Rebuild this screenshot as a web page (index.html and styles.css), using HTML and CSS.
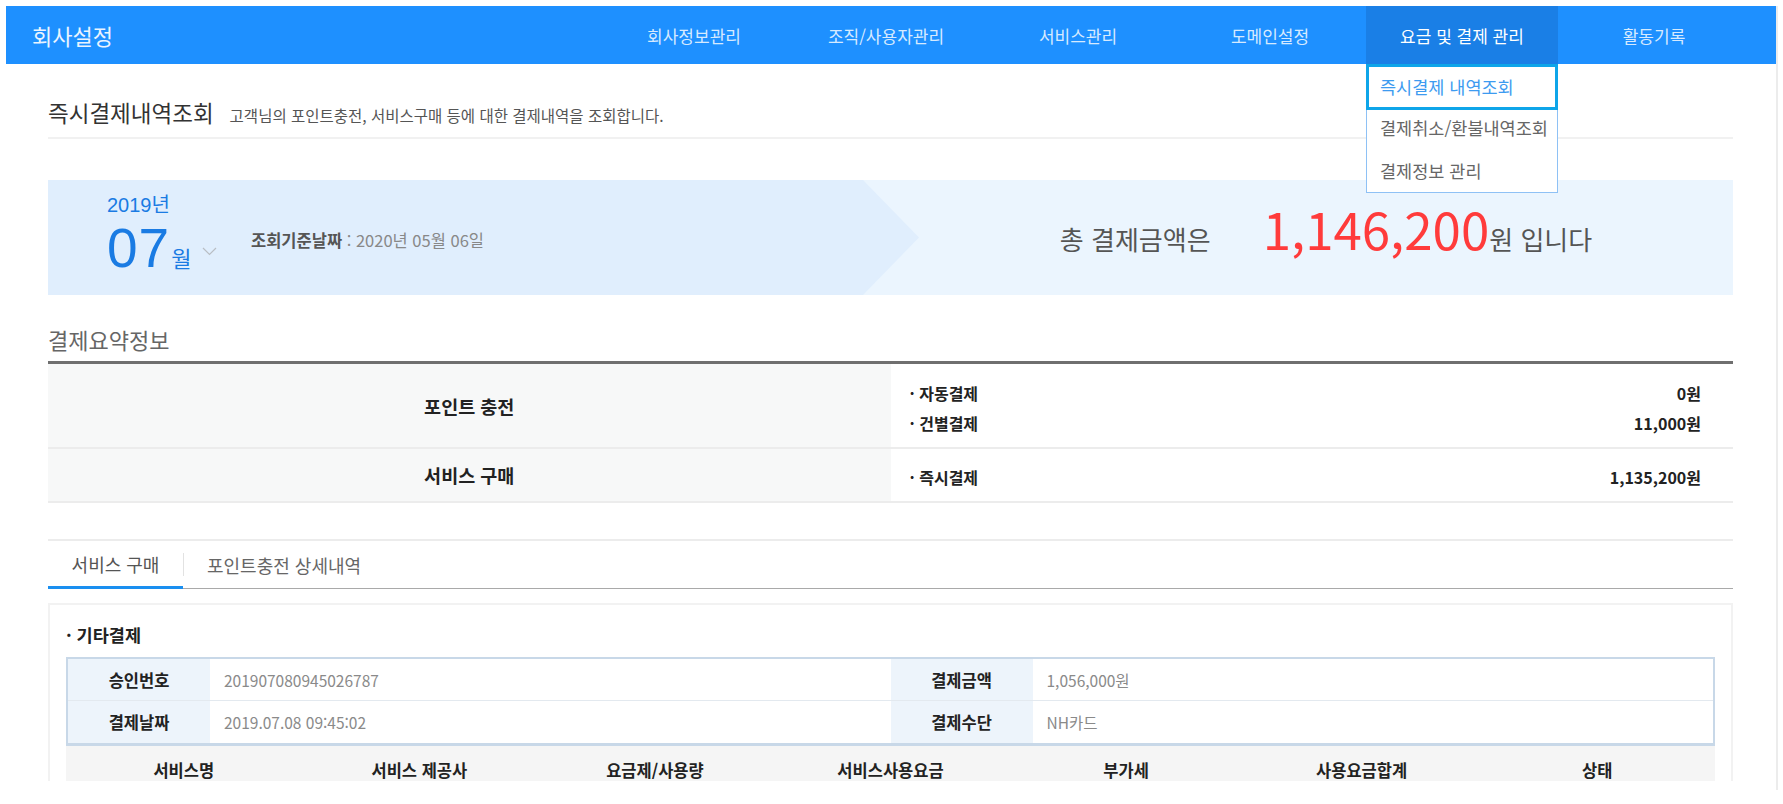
FILE: index.html
```html
<!DOCTYPE html>
<html lang="ko">
<head>
<meta charset="utf-8">
<title>회사설정 - 즉시결제내역조회</title>
<link rel="stylesheet" href="styles.css">
</head>
<body>
<div class="screen">
  <div class="page">
    <header class="gnb">
      <div class="logo">회사설정</div>
      <nav class="menu">
        <div class="menu-item">회사정보관리</div>
        <div class="menu-item">조직/사용자관리</div>
        <div class="menu-item">서비스관리</div>
        <div class="menu-item">도메인설정</div>
        <div class="menu-item active">요금 및 결제 관리
          <ul class="dropdown">
            <li class="dd-item current">즉시결제 내역조회</li>
            <li class="dd-item second">결제취소/환불내역조회</li>
            <li class="dd-item third">결제정보 관리</li>
          </ul>
        </div>
        <div class="menu-item">활동기록</div>
      </nav>
    </header>

    <main class="content">
      <div class="title-row">
        <h1 class="page-title">즉시결제내역조회</h1>
        <p class="page-desc">고객님의 포인트충전, 서비스구매 등에 대한 결제내역을 조회합니다.</p>
      </div>

      <section class="banner">
        <div class="banner-left">
          <div class="period">
            <div class="year">2019년</div>
            <div class="month"><span class="mm">07</span><span class="wol">월</span><svg class="chev" width="15" height="9" viewBox="0 0 15 9"><polyline points="1,1 7.5,7.5 14,1" fill="none" stroke="#b9bec4" stroke-width="1.2"/></svg></div>
          </div>
          <div class="basis"><b>조회기준날짜</b> : 2020년 05월 06일</div>
        </div>
        <div class="banner-right">
          <span class="total-label">총 결제금액은</span>
          <strong class="total-amount">1,146,200</strong>
          <span class="total-unit">원 입니다</span>
        </div>
      </section>

      <h2 class="sec-title">결제요약정보</h2>
      <div class="summary">
        <div class="sum-row r1">
          <div class="sum-name">포인트 충전</div>
          <div class="sum-detail">
            <div class="line"><span>· 자동결제</span><span>0원</span></div>
            <div class="line"><span>· 건별결제</span><span>11,000원</span></div>
          </div>
        </div>
        <div class="sum-row r2">
          <div class="sum-name">서비스 구매</div>
          <div class="sum-detail">
            <div class="line"><span>· 즉시결제</span><span>1,135,200원</span></div>
          </div>
        </div>
      </div>

      <div class="tabs">
        <div class="tab active">서비스 구매</div>
        <div class="tab-sep"></div>
        <div class="tab">포인트충전 상세내역</div>
      </div>

      <div class="box">
        <div class="box-title">· 기타결제</div>
        <div class="info">
          <div class="th row1">승인번호</div>
          <div class="td row1">201907080945026787</div>
          <div class="th row1">결제금액</div>
          <div class="td row1">1,056,000원</div>
          <div class="th">결제날짜</div>
          <div class="td">2019.07.08 09:45:02</div>
          <div class="th">결제수단</div>
          <div class="td">NH카드</div>
        </div>
        <div class="list-head">
          <div>서비스명</div>
          <div>서비스 제공사</div>
          <div>요금제/사용량</div>
          <div>서비스사용요금</div>
          <div>부가세</div>
          <div>사용요금합계</div>
          <div>상태</div>
        </div>
      </div>
    </main>
  </div>
</div>
</body>
</html>
```

FILE: styles.css
```css
* { box-sizing: border-box; margin: 0; padding: 0; }

body {
  background: #fff;
  font-family: "Noto Sans CJK KR", "Noto Sans", sans-serif;
  color: #333;
}

.screen {
  margin: 6px 0 0 6px;
  width: 1772px;
  height: 784px;
  border-right: 2px solid #ececec;
}

.page {
  height: 775px;
  overflow: hidden;
  position: relative;
}

/* ---------- top navigation ---------- */
.gnb {
  height: 58px;
  background: #1e90ff;
  display: flex;
  align-items: center;
  padding: 0 26px;
}

.logo {
  font-size: 22px;
  color: #eaf4ff;
}

.menu {
  margin-left: auto;
  display: flex;
  height: 100%;
}

.menu-item {
  width: 192px;
  height: 100%;
  display: flex;
  align-items: center;
  justify-content: center;
  font-size: 17px;
  color: #d6eaff;
  position: relative;
  white-space: nowrap;
}

.menu-item.active {
  background: #1a7fe6;
  color: #fff;
}

.dropdown {
  position: absolute;
  top: 100%;
  left: 0;
  width: 100%;
  background: #fff;
  list-style: none;
  border: 1px solid #8ec1f5;
  border-top: none;
  z-index: 5;
  font-size: 17.5px;
  color: #666;
}

.dd-item {
  padding-left: 13px;
  white-space: nowrap;
}

.dd-item.current {
  height: 46px;
  line-height: 40px;
  border: 3px solid #0ea5e9;
  margin: 0 -1px;
  padding-left: 11px;
  color: #3d9bf0;
}

.dd-item.second {
  line-height: 36px;
}

.dd-item.third {
  margin-top: 4px;
  line-height: 42px;
}

/* ---------- content ---------- */
.content {
  padding: 0 43px 0 42px;
}

.title-row {
  display: flex;
  align-items: baseline;
  gap: 16px;
  padding: 33px 0 9px;
  border-bottom: 2px solid #f1f1f1;
}

.page-title {
  font-size: 22.5px;
  font-weight: 400;
  line-height: 31px;
  color: #333;
}

.page-desc {
  font-size: 15.5px;
  color: #555;
}

/* banner */
.banner {
  margin-top: 41px;
  height: 115px;
  display: flex;
  background: #ebf5fe;
}

.banner-left {
  width: 871px;
  background: #e0eefd;
  clip-path: polygon(0 0, 815px 0, 871px 50%, 815px 100%, 0 100%);
  display: flex;
  align-items: center;
  padding-left: 59px;
}

.period {
  align-self: flex-start;
  padding-top: 14px;
  width: 144px;
}

.year {
  font-family: "Liberation Sans", "Noto Sans CJK KR", sans-serif;
  font-size: 20px;
  line-height: 22px;
  color: #1a7be3;
}

.month {
  margin-top: 7px;
  font-family: "Liberation Sans", sans-serif;
  font-size: 55px;
  line-height: 50px;
  color: #1a7be3;
  white-space: nowrap;
}

.mm {
  letter-spacing: 1px;
}

.wol {
  font-family: "Noto Sans CJK KR", sans-serif;
  font-size: 22px;
  line-height: 22px;
  margin-left: 1px;
}

.chev {
  vertical-align: 11px;
  margin-left: 11px;
}

.basis {
  margin-top: 5px;
  font-size: 16.5px;
  color: #888;
}

.basis b {
  color: #555;
  font-weight: 700;
}

.banner-right {
  flex: 1;
  display: flex;
  align-items: baseline;
  justify-content: center;
  padding-bottom: 8px;
  align-self: center;
  line-height: 60px;
}

.total-label {
  font-size: 26px;
  color: #555;
  margin-right: 52px;
}

.total-amount {
  font-size: 51px;
  font-weight: 400;
  color: #ff3b3b;
}

.total-unit {
  font-size: 26px;
  color: #555;
}

/* summary */
.sec-title {
  margin-top: 30px;
  font-size: 22px;
  font-weight: 400;
  line-height: 29px;
  color: #666;
}

.summary {
  margin-top: 7px;
  border-top: 3px solid #6f6f6f;
}

.sum-row {
  display: flex;
  border-bottom: 2px solid #ececec;
}

.sum-row.r1 { height: 85px; }
.sum-row.r2 { height: 54px; }

.sum-name {
  width: 50%;
  background: #f7f8f8;
  display: flex;
  align-items: center;
  justify-content: center;
  font-size: 18.5px;
  font-weight: 700;
  color: #222;
}

.sum-detail {
  flex: 1;
  padding: 4px 32px 0 19px;
  display: flex;
  flex-direction: column;
  justify-content: center;
  font-size: 16px;
  font-weight: 700;
  color: #222;
}

.sum-row.r2 .sum-detail { padding-top: 3px; }

.line {
  display: flex;
  justify-content: space-between;
  line-height: 30px;
}

/* tabs */
.tabs {
  margin-top: 36px;
  height: 50px;
  display: flex;
  border-top: 2px solid #ececec;
  border-bottom: 1px solid #a9a9a9;
}

.tab {
  display: flex;
  align-items: center;
  font-size: 18px;
  color: #666;
  padding-left: 23px;
}

.tab.active {
  width: 135px;
  padding-left: 0;
  justify-content: center;
  border-bottom: 3px solid #1a8ff0;
  margin-bottom: -1px;
  color: #555;
}

.tab-sep {
  width: 1px;
  height: 23px;
  align-self: center;
  background: #e2e2e2;
}

/* detail box */
.box {
  margin-top: 14px;
  border: 2px solid #f2f2f2;
  padding: 0 16px 40px;
}

.box-title {
  padding-top: 17px;
  font-size: 17.5px;
  font-weight: 700;
  line-height: 26px;
  color: #222;
}

.info {
  margin-top: 9px;
  display: grid;
  grid-template-columns: 142px 1fr 142px 1fr;
  border-style: solid;
  border-color: #c8d8e8;
  border-width: 2px 2px 3px;
}

.th, .td {
  height: 42px;
  line-height: 42px;
}

.row1 {
  border-bottom: 1px solid #e3e9ef;
}

.th {
  background: #edf4fb;
  text-align: center;
  font-size: 16.5px;
  font-weight: 700;
  color: #222;
}

.td {
  padding-left: 14px;
  font-size: 15.5px;
  color: #8a8a8a;
  background: #fff;
}

.list-head {
  display: grid;
  grid-template-columns: repeat(7, 1fr);
  height: 50px;
  line-height: 48px;
  background: #f5f5f5;
  text-align: center;
  font-size: 16.5px;
  font-weight: 700;
  color: #222;
}
```
